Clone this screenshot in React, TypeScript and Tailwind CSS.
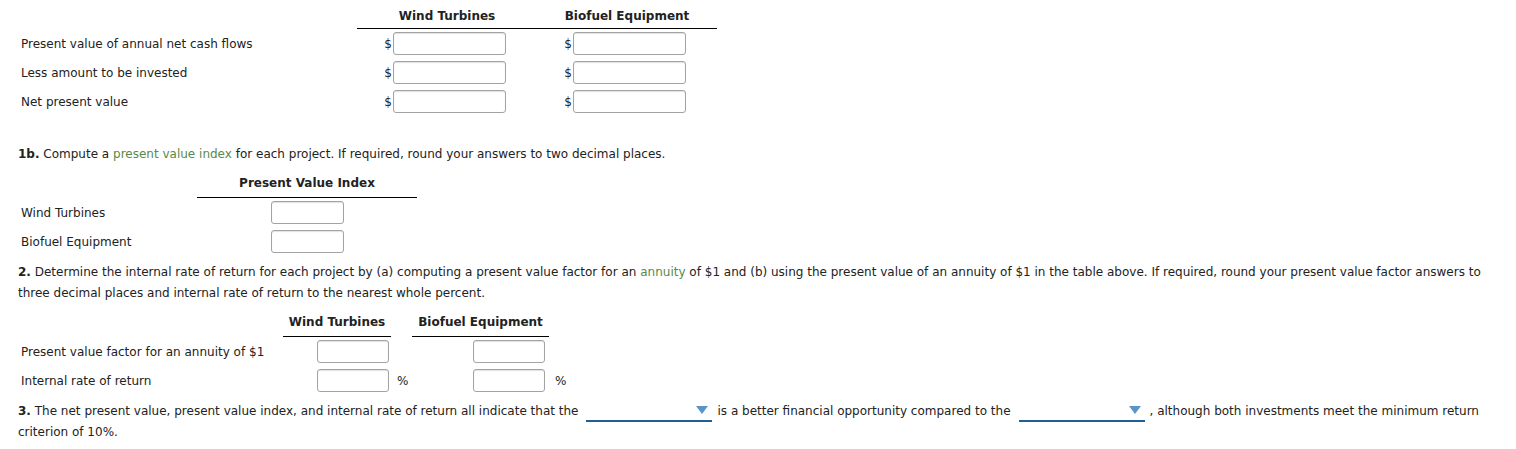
import React from "react";

const font = { fontFamily: '"DejaVu Sans", Verdana, sans-serif' };

function Box({ w = "w-[113px]" }: { w?: string }) {
  return (
    <div
      className={`${w} h-[23px] rounded-[3px] border border-[#a3a3a3] bg-white shadow-[inset_0_1px_1px_rgba(0,0,0,0.12)]`}
    />
  );
}

function Money() {
  return (
    <div className="flex items-center justify-center pr-[4px]">
      <span className="mr-[1px]">$</span>
      <Box />
    </div>
  );
}

function Dropdown() {
  return (
    <span className="relative ml-[8px] mr-[5px] inline-block h-[22px] w-[126px] border-b-2 border-[#1f5f91] align-middle">
      <span className="absolute right-[4px] top-[6px] h-0 w-0 border-x-[6px] border-t-[8px] border-x-transparent border-t-[#5b95c8]" />
    </span>
  );
}

export default function App() {
  return (
    <div className="w-[1516px] h-[449px] bg-white text-[12px] text-[#222] px-[18px] pt-[1px]" style={font}>
      {/* 1a table */}
      <div className="grid grid-cols-[339px_180px_180px]">
        <div className="h-[28px]" />
        <div className="h-[28px] border-b border-black flex items-center justify-center font-bold pt-[2px]">Wind Turbines</div>
        <div className="h-[28px] border-b border-black flex items-center justify-center font-bold pt-[2px]">Biofuel Equipment</div>
        {["Present value of annual net cash flows", "Less amount to be invested", "Net present value"].map((l) => (
          <React.Fragment key={l}>
            <div className="h-[29px] flex items-center pl-[3px]">{l}</div>
            <Money />
            <Money />
          </React.Fragment>
        ))}
      </div>

      <p className="mt-[28px] h-[21px] leading-[21px]">
        <b>1b.</b> Compute a <span className="text-[#5a8a4a]">present value index</span> for each project. If required, round your answers to two decimal places.
      </p>

      <div className="mt-[5px] grid grid-cols-[179px_220px]">
        <div className="h-[28px]" />
        <div className="h-[28px] border-b border-black flex items-center justify-center font-bold pb-[1px]">Present Value Index</div>
        {["Wind Turbines", "Biofuel Equipment"].map((l) => (
          <React.Fragment key={l}>
            <div className="h-[29px] flex items-center pl-[3px]">{l}</div>
            <div className="flex items-center justify-center">
              <Box w="w-[73px]" />
            </div>
          </React.Fragment>
        ))}
      </div>

      <p className="mt-[6px] leading-[21px] whitespace-nowrap">
        <b>2.</b> Determine the internal rate of return for each project by (a) computing a present value factor for an{" "}
        <span className="text-[#5a8a4a]">annuity</span> of $1 and (b) using the present value of an annuity of $1 in the table above. If required, round your present value factor answers to
        <br />
        three decimal places and internal rate of return to the nearest whole percent.
      </p>

      <div className="mt-[4px] grid grid-cols-[265px_108px_21px_137px_30px]">
        <div className="h-[29px]" />
        <div className="h-[29px] border-b border-black flex items-center justify-center font-bold">Wind Turbines</div>
        <div />
        <div className="h-[29px] border-b border-black flex items-center justify-center font-bold">Biofuel Equipment</div>
        <div />
        {["Present value factor for an annuity of $1", "Internal rate of return"].map((l, i) => (
          <React.Fragment key={l}>
            <div className="h-[29px] flex items-center pl-[3px]">{l}</div>
            <div className="flex items-center justify-end pr-[2px]">
              <Box w="w-[72px]" />
            </div>
            <div className="flex items-center pl-[6px]">{i === 1 ? "%" : ""}</div>
            <div className="flex items-center justify-end pr-[4px]">
              <Box w="w-[72px]" />
            </div>
            <div className="flex items-center pl-[6px]">{i === 1 ? "%" : ""}</div>
          </React.Fragment>
        ))}
      </div>

      <p className="mt-[5px] leading-[21px] whitespace-nowrap">
        <b>3.</b> The net present value, present value index, and internal rate of return all indicate that the
        <Dropdown />
        is a better financial opportunity compared to the
        <Dropdown />
        , although both investments meet the minimum return
        <br />
        criterion of 10%.
      </p>
    </div>
  );
}
